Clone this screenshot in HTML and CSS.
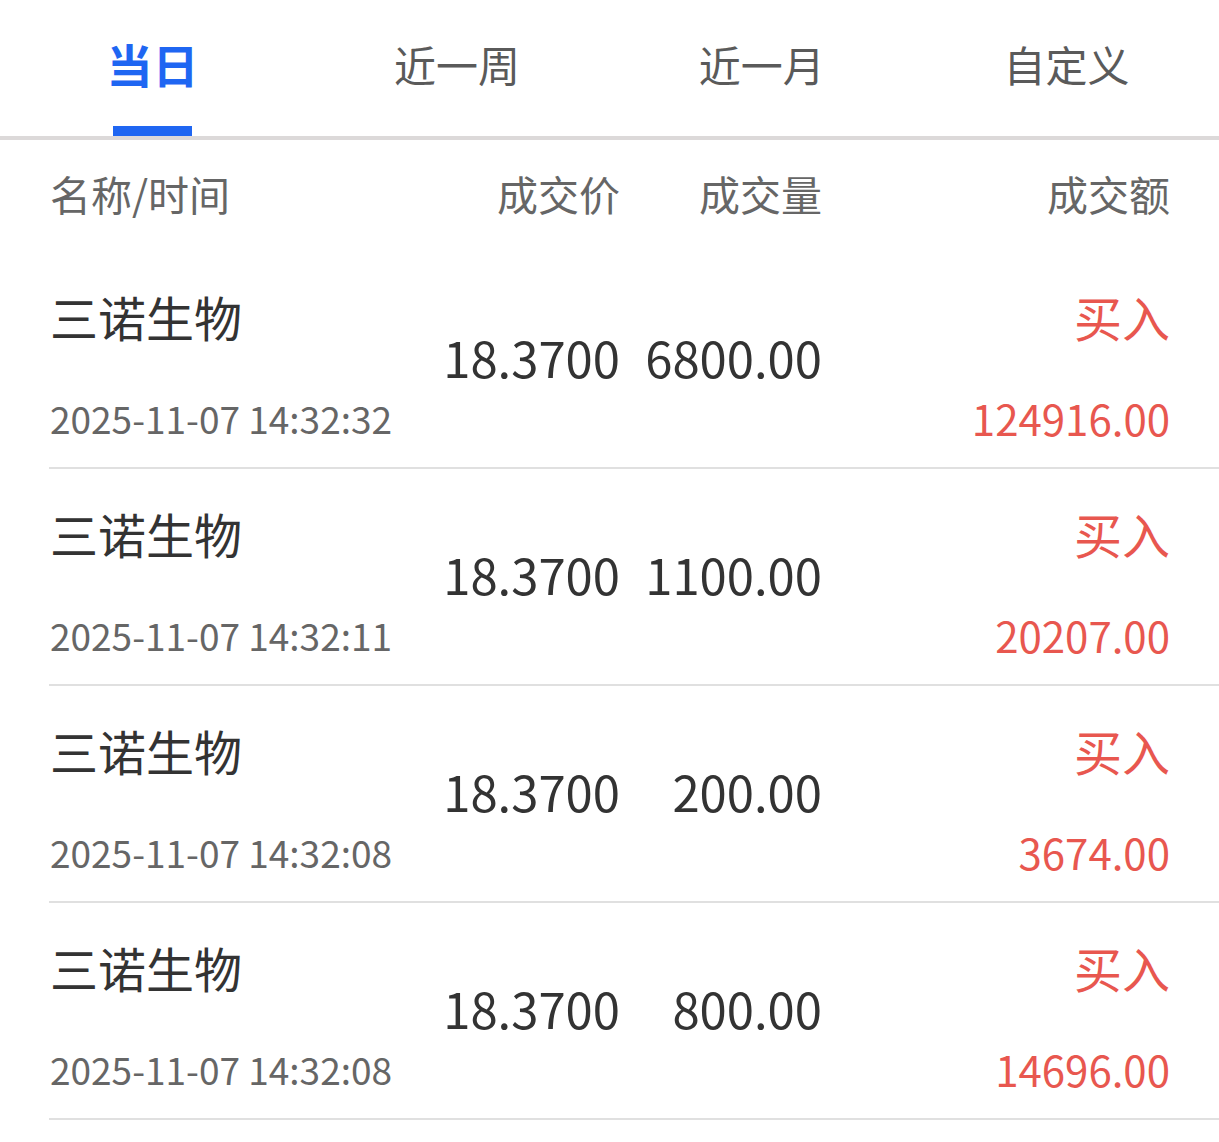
FILE: index.html
```html
<!DOCTYPE html>
<html lang="zh-CN">
<head>
    <meta charset="UTF-8">
    <meta name="viewport" content="width=device-width, initial-scale=1.0">
    <title>成交明细</title>
    <link rel="stylesheet" href="styles.css">
</head>
<body>

    <!-- 时间范围切换 -->
    <div class="tabs">
        <div class="tab active">当日</div>
        <div class="tab">近一周</div>
        <div class="tab">近一月</div>
        <div class="tab">自定义</div>
    </div>

    <!-- 表头 -->
    <div class="head">
        <div class="col-name">名称/时间</div>
        <div class="col-num">成交价</div>
        <div class="col-num">成交量</div>
        <div class="col-num">成交额</div>
    </div>

    <!-- 成交记录 -->
    <div class="list">
        <div class="row">
            <div class="cell-name">
                <div class="name">三诺生物</div>
                <div class="time">2025-11-07 14:32:32</div>
            </div>
            <div class="cell-num">18.3700</div>
            <div class="cell-num">6800.00</div>
            <div class="cell-amount">
                <div class="side">买入</div>
                <div class="amount">124916.00</div>
            </div>
        </div>
        <div class="row">
            <div class="cell-name">
                <div class="name">三诺生物</div>
                <div class="time">2025-11-07 14:32:11</div>
            </div>
            <div class="cell-num">18.3700</div>
            <div class="cell-num">1100.00</div>
            <div class="cell-amount">
                <div class="side">买入</div>
                <div class="amount">20207.00</div>
            </div>
        </div>
        <div class="row">
            <div class="cell-name">
                <div class="name">三诺生物</div>
                <div class="time">2025-11-07 14:32:08</div>
            </div>
            <div class="cell-num">18.3700</div>
            <div class="cell-num">200.00</div>
            <div class="cell-amount">
                <div class="side">买入</div>
                <div class="amount">3674.00</div>
            </div>
        </div>
        <div class="row">
            <div class="cell-name">
                <div class="name">三诺生物</div>
                <div class="time">2025-11-07 14:32:08</div>
            </div>
            <div class="cell-num">18.3700</div>
            <div class="cell-num">800.00</div>
            <div class="cell-amount">
                <div class="side">买入</div>
                <div class="amount">14696.00</div>
            </div>
        </div>
    </div>

</body>
</html>
```

FILE: styles.css
```css
body {
    margin: 0;
    font-family: "Noto Sans CJK SC", "Noto Sans", sans-serif;
    background-color: #fff;
    color: #333;
}

/* 顶部切换 */
.tabs {
    display: grid;
    grid-template-columns: repeat(4, 1fr);
    height: 136px;
    border-bottom: 4px solid #dcd9d9;
}

.tab {
    display: flex;
    justify-content: center;
    align-items: center;
    padding-bottom: 10px;
    font-size: 42px;
    color: #5a5a5a;
    position: relative;
}

.tab.active {
    font-size: 46px;
    font-weight: bold;
    color: #1f66f2;
}

.tab.active::after {
    content: "";
    position: absolute;
    bottom: 0;
    left: 50%;
    width: 79px;
    height: 10px;
    margin-left: -39px;
    background-color: #1f66f2;
}

/* 表头和列表共用列宽 */
.head,
.row {
    display: grid;
    grid-template-columns: 1fr 200px 202px 348px;
    padding-right: 49px;
}

.head {
    height: 112px;
    align-items: center;
    padding-left: 50px;
    padding-bottom: 6px;
    box-sizing: border-box;
    font-size: 41px;
    color: #666;
}

.col-num {
    text-align: right;
}

.row {
    margin-left: 49px;
    padding-left: 1px;
    padding-top: 34px;
    padding-bottom: 24px;
    border-bottom: 2px solid #e0e0e0;
}

.name {
    font-size: 48px;
    line-height: 60px;
    color: #333;
}

.time {
    margin-top: 47px;
    font-size: 37px;
    line-height: 50px;
    color: #666;
}

.cell-num {
    align-self: center;
    padding-bottom: 16px;
    text-align: right;
    font-size: 49px;
    color: #333;
}

.cell-amount {
    text-align: right;
}

.side {
    font-size: 48px;
    line-height: 60px;
    color: #e8574f;
}

.amount {
    margin-top: 47px;
    font-size: 42px;
    line-height: 50px;
    color: #e8574f;
}
```
